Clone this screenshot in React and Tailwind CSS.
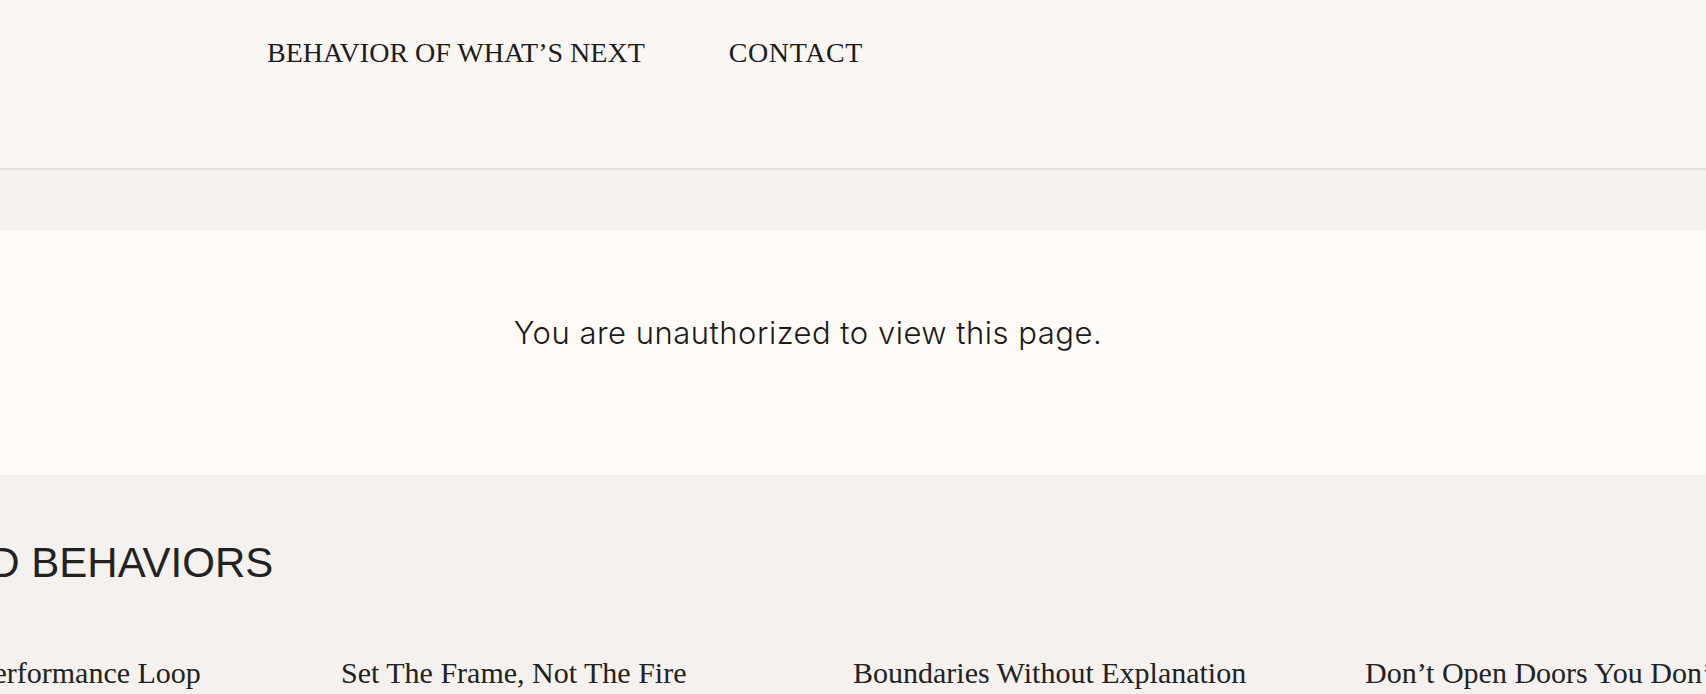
import React from 'react';

const related = [
  'Ending The Performance Loop',
  'Set The Frame, Not The Fire',
  'Boundaries Without Explanation',
  'Don’t Open Doors You Don’t Intend To Walk Through',
];

const App = () => {
  return (
    <div className="h-screen overflow-hidden bg-[#f5f1ee] text-[#222]">
      {/* Header */}
      <header className="h-[170px] bg-[#faf6f3] border-b-2 border-[#e3e0dd]">
        <nav
          className="flex gap-[84px] pl-[267px] pt-[37px] text-[28px] leading-[32px] uppercase text-[#1c1c1c]"
          style={{ fontFamily: '"Liberation Serif", "Times New Roman", serif' }}
        >
          <span>Behavior of What’s Next</span>
          <span className="tracking-[0.6px]">Contact</span>
        </nav>
      </header>

      {/* Spacer band */}
      <div className="h-[60px] bg-[#f5f1ed]"></div>

      {/* Message */}
      <section className="h-[245px] bg-[#fffcf8] pt-[85px]">
        <div className="flex justify-center pr-[90px]">
          <p
            className="text-[31px] leading-[36px] font-light tracking-[0.5px] text-[#1a1a1a]"
            style={{ fontFamily: 'Inter, "Noto Sans", sans-serif' }}
          >
            You are unauthorized to view this page.
          </p>
        </div>
      </section>

      {/* Related */}
      <section className="flex justify-center bg-[#f5f1ee]">
        <div className="w-[2048px] shrink-0 pt-[66px]">
          <h2
            className="text-[42px] leading-[44px] uppercase text-[#222] whitespace-nowrap"
            style={{ fontFamily: '"Liberation Sans", Arial, sans-serif' }}
          >
            Related Behaviors
          </h2>
          <div className="grid grid-cols-4 mt-[71px]">
            {related.map((title) => (
              <p
                key={title}
                className="text-[30px] leading-[34px] whitespace-nowrap text-[#222]"
                style={{ fontFamily: '"Liberation Serif", "Times New Roman", serif' }}
              >
                {title}
              </p>
            ))}
          </div>
        </div>
      </section>
    </div>
  );
};

export default App;
